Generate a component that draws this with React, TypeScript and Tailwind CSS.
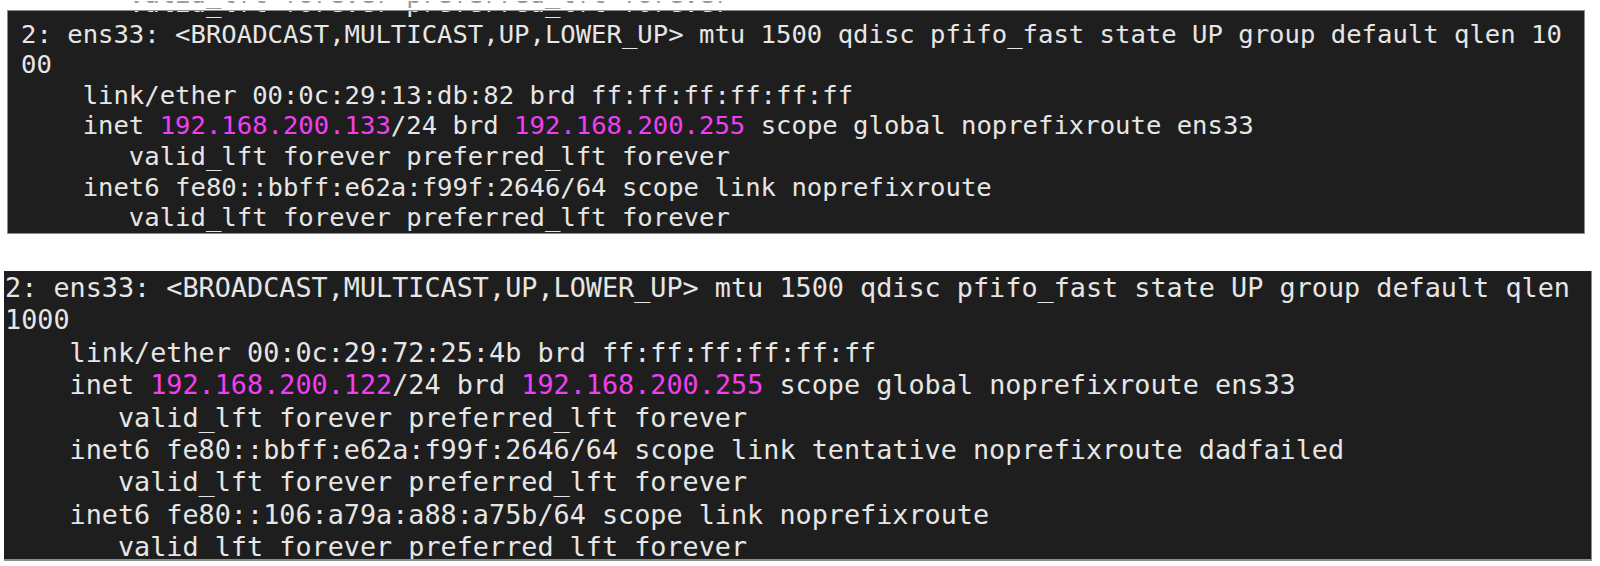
import React from "react";

const M = ({ children }: { children: React.ReactNode }) => (
  <span className="text-[#f23ef2]">{children}</span>
);

export default function App() {
  const mono = { fontFamily: '"DejaVu Sans Mono", "Liberation Mono", monospace' };
  return (
    <div className="w-[1600px] h-[566px] bg-white overflow-hidden flex flex-col" style={mono}>
      <div className="h-[10px] shrink-0" />
      <div className="ml-[7px] w-[1578px] h-[224px] shrink-0 bg-[#1e1e1e] border border-[#8c8c8c] overflow-visible relative">
        <div className="absolute inset-x-0 top-[-10px] h-[10px] overflow-hidden">
          <pre className="text-[25.6px] leading-[30.6px] text-[#9a9a9a] pl-[13px] mt-[-22px] m-0" style={mono}>{"       valid_lft forever preferred_lft forever"}</pre>
        </div>
        <div className="flow-root h-full overflow-hidden">
          <pre className="text-[25.6px] leading-[30.6px] text-[#e6e6e6] pl-[13px] mt-[-23px] m-0" style={mono}>
{"       valid_lft forever preferred_lft forever\n"}
{"2: ens33: <BROADCAST,MULTICAST,UP,LOWER_UP> mtu 1500 qdisc pfifo_fast state UP group default qlen 10\n"}
{"00\n"}
{"    link/ether 00:0c:29:13:db:82 brd ff:ff:ff:ff:ff:ff\n"}
{"    inet "}<M>192.168.200.133</M>{"/24 brd "}<M>192.168.200.255</M>{" scope global noprefixroute ens33\n"}
{"       valid_lft forever preferred_lft forever\n"}
{"    inet6 fe80::bbff:e62a:f99f:2646/64 scope link noprefixroute\n"}
{"       valid_lft forever preferred_lft forever"}
          </pre>
        </div>
      </div>
      <div className="h-[37px] shrink-0" />
      <div className="ml-[4px] w-[1588px] h-[290px] shrink-0 bg-[#1e1e1e] border-b-2 border-r border-[#8c8c8c] overflow-hidden">
        <pre className="text-[26.8px] leading-[32.4px] text-[#e6e6e6] pl-[1px] mt-[1px] m-0" style={mono}>
{"2: ens33: <BROADCAST,MULTICAST,UP,LOWER_UP> mtu 1500 qdisc pfifo_fast state UP group default qlen\n"}
{"1000\n"}
{"    link/ether 00:0c:29:72:25:4b brd ff:ff:ff:ff:ff:ff\n"}
{"    inet "}<M>192.168.200.122</M>{"/24 brd "}<M>192.168.200.255</M>{" scope global noprefixroute ens33\n"}
{"       valid_lft forever preferred_lft forever\n"}
{"    inet6 fe80::bbff:e62a:f99f:2646/64 scope link tentative noprefixroute dadfailed\n"}
{"       valid_lft forever preferred_lft forever\n"}
{"    inet6 fe80::106:a79a:a88:a75b/64 scope link noprefixroute\n"}
{"       valid_lft forever preferred_lft forever"}
        </pre>
      </div>
    </div>
  );
}
